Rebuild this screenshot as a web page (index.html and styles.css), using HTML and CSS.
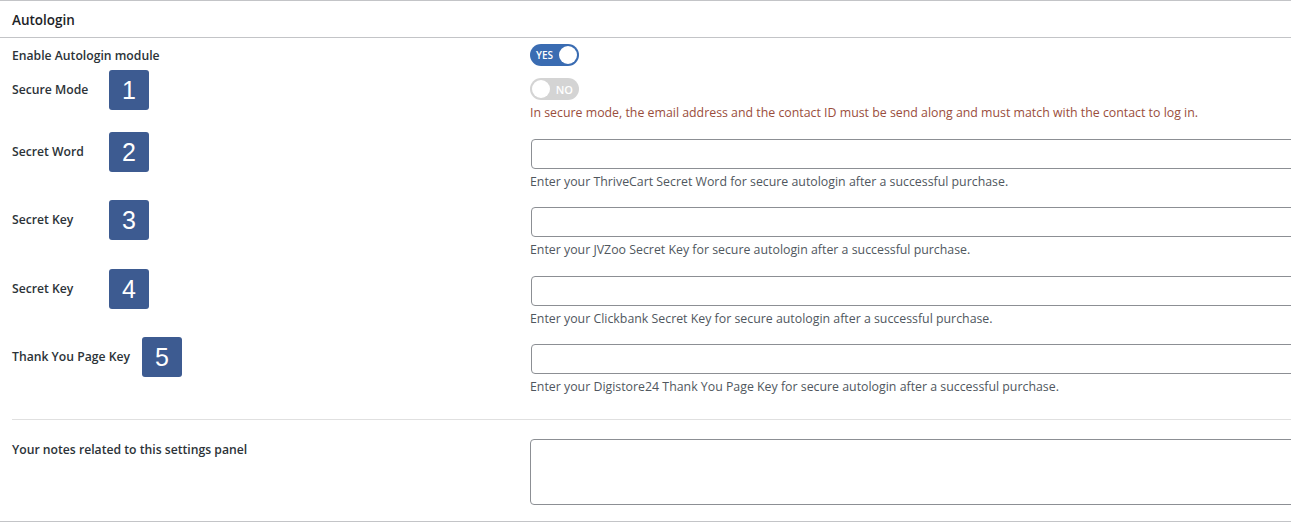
FILE: index.html
```html
<!DOCTYPE html>
<html>
<head>
<meta charset="utf-8">
<link rel="stylesheet" href="styles.css">
</head>
<body>
<div class="panel">
  <div class="panel-head">Autologin</div>
  <div class="panel-body">
    <div class="row row-toggle first">
      <div class="label"><span class="label-text">Enable Autologin module</span></div>
      <div class="field">
        <span class="toggle on"><span class="toggle-text">YES</span><span class="knob"></span></span>
      </div>
    </div>
    <div class="row row-toggle">
      <div class="label"><span class="label-text">Secure Mode</span><span class="badge">1</span></div>
      <div class="field">
        <span class="toggle off"><span class="knob"></span><span class="toggle-text">NO</span></span>
        <p class="desc warn">In secure mode, the email address and the contact ID must be send along and must match with the contact to log in.</p>
      </div>
    </div>
    <div class="row">
      <div class="label"><span class="label-text">Secret Word</span><span class="badge">2</span></div>
      <div class="field">
        <input class="text-input" type="text">
        <p class="desc">Enter your ThriveCart Secret Word for secure autologin after a successful purchase.</p>
      </div>
    </div>
    <div class="row">
      <div class="label"><span class="label-text">Secret Key</span><span class="badge">3</span></div>
      <div class="field">
        <input class="text-input" type="text">
        <p class="desc">Enter your JVZoo Secret Key for secure autologin after a successful purchase.</p>
      </div>
    </div>
    <div class="row">
      <div class="label"><span class="label-text">Secret Key</span><span class="badge">4</span></div>
      <div class="field">
        <input class="text-input" type="text">
        <p class="desc">Enter your Clickbank Secret Key for secure autologin after a successful purchase.</p>
      </div>
    </div>
    <div class="row last">
      <div class="label"><span class="label-text">Thank You Page Key</span><span class="badge">5</span></div>
      <div class="field">
        <input class="text-input" type="text">
        <p class="desc">Enter your Digistore24 Thank You Page Key for secure autologin after a successful purchase.</p>
      </div>
    </div>
    <div class="notes">
      <div class="row">
        <div class="label"><span class="label-text">Your notes related to this settings panel</span></div>
        <div class="field">
          <textarea class="notes-area"></textarea>
        </div>
      </div>
    </div>
  </div>
</div>
</body>
</html>
```

FILE: styles.css
```css
html, body {
  margin: 0;
  padding: 0;
  background: #ffffff;
  overflow: hidden;
}
body {
  font-family: "Open Sans", "Noto Sans", sans-serif;
  color: #1d2327;
  width: 1291px;
  height: 522px;
}
.panel {
  border-top: 1px solid #c3c4c7;
  border-bottom: 1px solid #c3c4c7;
  height: 522px;
  box-sizing: border-box;
  display: flex;
  flex-direction: column;
}
.panel-head {
  font-size: 13.5px;
  font-weight: 600;
  line-height: 20px;
  padding: 9px 12px 7px;
  border-bottom: 1px solid #c3c4c7;
  color: #1d2327;
}
.panel-body {
  padding: 0 0 0 12px;
  flex: 1;
}
.row {
  display: grid;
  grid-template-columns: 518px 1fr;
  margin-top: 16.5px;
}
.row.first {
  margin-top: 6px;
}
.row-toggle + .row-toggle {
  margin-top: 12px;
}
.label {
  display: flex;
  align-items: center;
  height: 20px;
  margin-top: 3px;
  font-size: 12.2px;
  font-weight: 600;
  line-height: 20px;
  color: #2c3338;
}
.row-toggle .label {
  margin-top: 2px;
}
.label-text {
  min-width: 85px;
  white-space: nowrap;
}
.badge {
  margin-left: 12px;
  width: 40px;
  height: 40px;
  flex: none;
  background: #3d5b91;
  border-radius: 3px;
  color: #ffffff;
  font-family: "Liberation Sans", Arial, sans-serif;
  font-weight: 400;
  font-size: 25px;
  line-height: 40px;
  text-align: center;
}
.field {
  min-width: 0;
}
.toggle {
  display: flex;
  align-items: center;
  box-sizing: border-box;
  width: 49px;
  height: 22px;
  border-radius: 11px;
  padding: 0 2px;
  font-size: 10px;
  font-weight: 600;
  color: #ffffff;
}
.toggle.on {
  background: #3a6cb2;
  justify-content: space-between;
  padding-left: 6px;
}
.toggle.off {
  background: #d4d4d4;
  justify-content: space-between;
  padding-right: 6px;
  font-size: 11px;
}
.knob {
  width: 18px;
  height: 18px;
  border-radius: 50%;
  background: #ffffff;
}
.desc {
  margin: 4px 0 0;
  font-size: 12.35px;
  line-height: 18px;
  color: #50575e;
  white-space: nowrap;
}
.desc.warn {
  color: #9a4e3c;
}
.text-input {
  display: block;
  box-sizing: border-box;
  width: 800px;
  height: 30px;
  margin: 0 0 0 1px;
  border: 1px solid #8c8f94;
  border-radius: 4px;
  background: #ffffff;
}
.notes {
  margin-top: 23px;
  border-top: 1px solid #e0e0e0;
  padding-top: 1px;
}
.notes .row {
  margin-top: 18px;
}
.notes .label {
  margin-top: 1px;
}
.notes-area {
  display: block;
  box-sizing: border-box;
  width: 800px;
  height: 66px;
  margin: 0;
  border: 1px solid #8c8f94;
  border-radius: 4px;
  resize: none;
}
```
